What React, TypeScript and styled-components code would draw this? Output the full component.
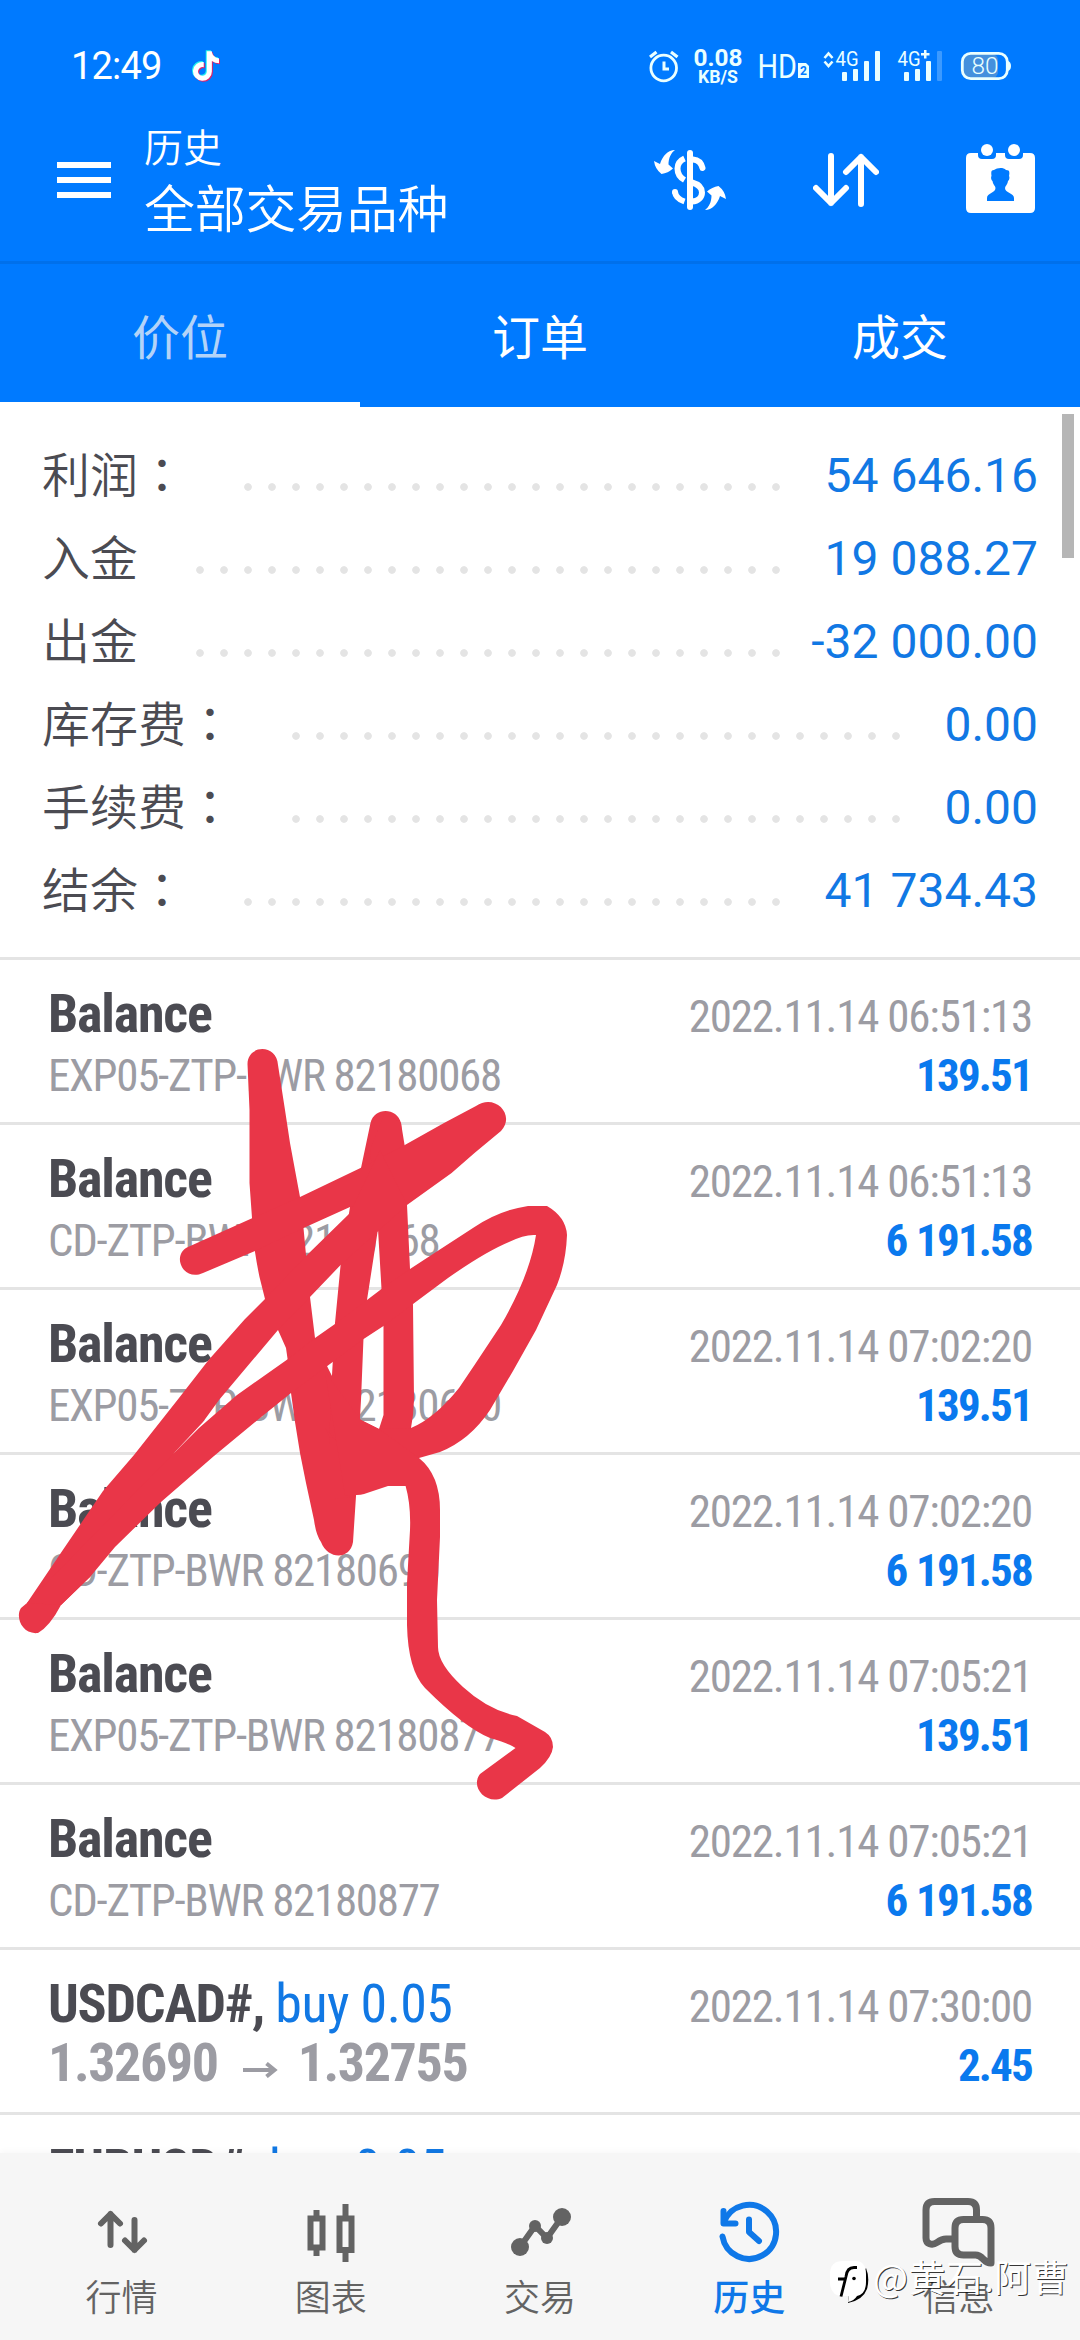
import styled, { createGlobalStyle, css } from 'styled-components';
import { FaTiktok } from 'react-icons/fa6';

const colors = {
	header: '#007aff',
	headerLine: '#0070eb',
	accent: '#1178e4',
	text: '#4b4b52',
	muted: '#9c9ca3',
	line: '#e4e4e4',
	nav: '#636363',
	navBg: '#f6f6f6',
	scribble: '#e93648',
};

const GlobalStyle = createGlobalStyle`
	* {
		box-sizing: border-box;
	}
	body {
		margin: 0;
		background: #fff;
		font-family: Roboto, 'Noto Sans CJK SC', sans-serif;
	}
`;

const Screen = styled.div`
	position: relative;
	width: 1080px;
	height: 2340px;
	overflow: hidden;
	display: flex;
	flex-direction: column;
	background: #fff;
	color: ${colors.text};
`;

/* ---------- header ---------- */

const Header = styled.header`
	background: ${colors.header};
	color: #fff;
	flex: none;
`;

const StatusBar = styled.div`
	height: 120px;
	padding: 12px 68px 0 71px;
	display: flex;
	align-items: center;
`;

const Clock = styled.span`
	width: 90px;
	font-size: 38px;
	line-height: 44px;
	letter-spacing: -0.8px;
	white-space: nowrap;
`;

const TikTok = styled.span`
	position: relative;
	width: 28px;
	height: 32px;
	margin-left: 31px;
	margin-right: auto;
`;

const TikTokLayer = styled(FaTiktok)<{ $shift: number }>`
	position: absolute;
	left: ${(props) => props.$shift}px;
	top: ${(props) => props.$shift}px;
	width: 26px;
	height: 30px;
`;

const AppBar = styled.div`
	height: 144px;
	padding: 0 45px 21px 57px;
	border-bottom: 3px solid ${colors.headerLine};
	display: flex;
	align-items: center;
	gap: 87px;
`;

const Titles = styled.div`
	flex: 1;
	margin-left: -54px;
	margin-top: 8px;
	display: flex;
	flex-direction: column;
	gap: 10px;
`;

const Subtitle = styled.span`
	font-size: 39px;
	line-height: 44px;
	font-weight: 350;
`;

const Title = styled.span`
	font-size: 51px;
	line-height: 60px;
	font-weight: 350;
	letter-spacing: -0.3px;
`;

const Tabs = styled.div`
	height: 143px;
	display: grid;
	grid-template-columns: repeat(3, 1fr);
`;

const Tab = styled.div<{ $active?: boolean }>`
	padding-top: 1px;
	border-bottom: 5px solid ${(props) => (props.$active ? '#fff' : 'transparent')};
	display: flex;
	align-items: center;
	justify-content: center;
	font-size: 48px;
	color: ${(props) => (props.$active ? '#b3d3f8' : '#fff')};
`;

/* ---------- summary ---------- */

const Summary = styled.section`
	flex: none;
	height: 553px;
	padding: 27px 42px 0;
	border-bottom: 3px solid ${colors.line};
`;

const SummaryRow = styled.div`
	display: flex;
	height: 83px;
	line-height: 83px;
	font-size: 48px;
`;

const SummaryLabel = styled.span`
	padding-top: 1px;
	font-weight: 350;
`;

const Colon = styled.span`
	font-family: 'Noto Sans CJK TC', sans-serif;
	font-weight: 400;
	line-height: 0;
`;

const Leader = styled.span`
	flex: 1;
	height: 8px;
	margin: 49px 29px 0 50px;
	background: radial-gradient(circle at center, ${colors.line} 3.4px, transparent 4.2px) 0 0 / 24px 8px repeat-x;
`;

const SummaryValue = styled.span`
	color: ${colors.accent};
`;

/* ---------- deals ---------- */

const condensed = css`
	font-family: 'Roboto Condensed', Roboto, sans-serif;
	font-stretch: 75%;
`;

const Deals = styled.section`
	flex: 1;
	min-height: 0;
	overflow: hidden;
`;

const Deal = styled.article`
	${condensed}
	height: 165px;
	padding: 24px 48px 0;
	border-bottom: 3px solid ${colors.line};
	white-space: nowrap;
`;

const DealLine = styled.div`
	height: 60px;
	display: flex;
	justify-content: space-between;
	align-items: baseline;
`;

const Symbol = styled.span`
	font-size: 54px;
	line-height: 60px;
	font-weight: 700;
	letter-spacing: -1.2px;
`;

const Side = styled.span`
	font-weight: 400;
	letter-spacing: -0.6px;
	color: ${colors.accent};
`;

const Time = styled.span`
	font-size: 45px;
	letter-spacing: -1.2px;
	color: ${colors.muted};
`;

const Comment = styled.span`
	font-size: 45px;
	line-height: 63px;
	letter-spacing: -1.3px;
	color: ${colors.muted};
`;

const Prices = styled.span`
	font-size: 54px;
	line-height: 57px;
	font-weight: 700;
	letter-spacing: -1.4px;
	color: ${colors.muted};
	display: flex;
	align-items: center;

	svg {
		margin: 14px 20px 0 25px;
	}
`;

const Profit = styled.span`
	font-size: 45px;
	line-height: 63px;
	font-weight: 700;
	letter-spacing: -1.8px;
	word-spacing: 1px;
	color: #0a79ee;
`;

/* ---------- bottom navigation ---------- */

const Nav = styled.nav`
	position: relative;
	flex: none;
	height: 187px;
	padding: 43px 17px 0;
	background: ${colors.navBg};
	box-shadow: 0 -2px 6px rgba(0, 0, 0, 0.03);
	display: grid;
	grid-template-columns: repeat(5, 1fr);
`;

const NavItem = styled.div<{ $active?: boolean }>`
	display: flex;
	flex-direction: column;
	align-items: center;
	gap: 9px;
	font-size: 36px;
	line-height: 44px;
	font-weight: ${(props) => (props.$active ? 500 : 350)};
	color: ${(props) => (props.$active ? '#0f78e8' : colors.nav)};
`;

/* ---------- overlays ---------- */

const ScrollThumb = styled.div`
	position: absolute;
	right: 6px;
	top: 414px;
	width: 12px;
	height: 144px;
	background: #b6b6b6;
`;

const Scribble = styled.svg`
	position: absolute;
	left: 0;
	top: 1040px;
`;

const Watermark = styled.div`
	position: absolute;
	left: 829px;
	top: 2256px;
	display: flex;
	gap: 4px;
	color: #fff;
	font-family: 'Noto Sans CJK SC', sans-serif;
	font-size: 37px;
	line-height: 40px;
	letter-spacing: 0.5px;
	font-weight: 400;
	white-space: nowrap;
	text-shadow: 1px 1px 0 rgba(0, 0, 0, 0.8);
`;

const summary = [
	{ label: '利润', colon: true, value: '54 646.16' },
	{ label: '入金', colon: false, value: '19 088.27' },
	{ label: '出金', colon: false, value: '-32 000.00' },
	{ label: '库存费', colon: true, value: '0.00' },
	{ label: '手续费', colon: true, value: '0.00' },
	{ label: '结余', colon: true, value: '41 734.43' },
];

type DealItem = {
	symbol: string;
	side?: string;
	comment?: string;
	prices?: [string, string];
	time: string;
	profit: string;
};

const deals: DealItem[] = [
	{ symbol: 'Balance', comment: 'EXP05-ZTP-BWR 82180068', time: '2022.11.14 06:51:13', profit: '139.51' },
	{ symbol: 'Balance', comment: 'CD-ZTP-BWR 82180068', time: '2022.11.14 06:51:13', profit: '6 191.58' },
	{ symbol: 'Balance', comment: 'EXP05-ZTP-BWR 82180690', time: '2022.11.14 07:02:20', profit: '139.51' },
	{ symbol: 'Balance', comment: 'CD-ZTP-BWR 82180690', time: '2022.11.14 07:02:20', profit: '6 191.58' },
	{ symbol: 'Balance', comment: 'EXP05-ZTP-BWR 82180877', time: '2022.11.14 07:05:21', profit: '139.51' },
	{ symbol: 'Balance', comment: 'CD-ZTP-BWR 82180877', time: '2022.11.14 07:05:21', profit: '6 191.58' },
	{ symbol: 'USDCAD#,', side: 'buy 0.05', prices: ['1.32690', '1.32755'], time: '2022.11.14 07:30:00', profit: '2.45' },
	{ symbol: 'EURUSD#,', side: 'buy 0.05', time: '', profit: '' },
];

function StatusIcons() {
	return (
		<svg width="364" height="40" viewBox="648 46 364 40" fill="none" overflow="visible" fontFamily="Roboto, sans-serif">
			{/* alarm */}
			<g stroke="#eaffff" strokeWidth="2.8">
				<circle cx="663.7" cy="68" r="12.8" />
				<path d="M650 57l6.500-5M677.500 57l-6.500-5" strokeWidth="3.200" />
				<path d="M664 61.500v7.500h5" strokeWidth="3" />
			</g>
			<g fill="#eaffff">
				<text x="693.500" y="66" fontSize="24.500" fontWeight="700" textLength="49" lengthAdjust="spacingAndGlyphs">0.08</text>
				<text x="698" y="83" fontSize="18" fontWeight="700" textLength="40" lengthAdjust="spacingAndGlyphs">KB/S</text>
				<text x="757.500" y="78" fontSize="33.500" fontWeight="400" textLength="39.500" lengthAdjust="spacingAndGlyphs">HD</text>
				<path d="M798 63h8l3 3v12h-11z" />
			</g>
			<text x="800" y="75" fontSize="12" fontWeight="700" fill="#007aff">2</text>
			{/* first sim */}
			<path d="M824.500 58l4-4.500 4 4.500M824.500 61.500l4 4.500 4-4.500" stroke="#eaffff" strokeWidth="2.600" />
			<g fill="#eaffff">
				<text x="835.500" y="65.500" fontSize="20.500" textLength="23" lengthAdjust="spacingAndGlyphs">4G</text>
				<rect x="842" y="72" width="5" height="9" rx="1" />
				<rect x="853" y="69" width="5" height="12" rx="1" />
				<rect x="864" y="61" width="5" height="20" rx="1" />
				<rect x="875" y="51" width="5" height="30" rx="1" />
				{/* second sim */}
				<text x="897.500" y="65.500" fontSize="20.500" textLength="23" lengthAdjust="spacingAndGlyphs">4G</text>
				<path d="M921 53h3v-3h2.500v3h3v2.500h-3v3h-2.500v-3h-3z" />
				<rect x="904" y="72" width="5" height="9" rx="1" />
				<rect x="915" y="69" width="5" height="12" rx="1" />
				<rect x="926" y="61" width="5" height="20" rx="1" />
			</g>
			<rect x="937" y="51" width="5" height="30" rx="1" fill="#3c9aff" />
			{/* battery */}
			<rect x="963" y="54" width="35" height="24" rx="6" fill="#4490dd" />
			<rect x="962.300" y="53.300" width="45" height="25.400" rx="8.500" stroke="#eaffff" strokeWidth="2.800" />
			<path d="M1008 61q3 1 3 5t-3 5z" fill="#eaffff" />
			<text x="971.500" y="73.500" fontSize="23" fontWeight="350" fill="#eaffff" textLength="27" lengthAdjust="spacingAndGlyphs">80</text>
		</svg>
	);
}

function MenuIcon() {
	return (
		<svg width="54" height="36" fill="#fff">
			<path d="M0 0h54v6H0zM0 15h54v6H0zM0 30h54v6H0z" />
		</svg>
	);
}

function CurrencyIcon() {
	return (
		<svg width="72" height="60" viewBox="0 0 72 60" fill="none">
			<g fill="#fff">
				<path d="M21 0C17 3 14.500 8 14.500 14.500L19 18.500Q14 23 7.500 24Q1 19 0 11L6 14C8.500 6 14 0 21 0z" />
				<path d="M51 60C55 57 57.500 52 57.500 45.500L53 41.500Q58 37 64.500 36Q71 41 72 49L66 46C63.500 54 58 60 51 60z" />
			</g>
			<g stroke="#fff" strokeWidth="6">
				<path d="M36 3v54" strokeLinecap="round" />
				<path d="M30.500 8.500C25 11 23.500 15 23.500 18.500C23.500 24 26 27.500 30.500 30" />
				<path d="M39 9.500C45 10 47.500 13.500 48.500 18" strokeLinecap="round" />
				<path d="M38 32.500C45 34.500 48 38 48 42.500C48 47 44.500 51 38 51.500" />
				<path d="M21 42C21.500 46.500 24.500 49.500 30.500 51.500" />
			</g>
			<circle cx="21" cy="42" r="3" fill="#fff" />
		</svg>
	);
}

function SortIcon() {
	return (
		<svg width="66" height="54" viewBox="0 0 66 54" fill="none" stroke="#fff" strokeWidth="6" strokeLinecap="round" strokeLinejoin="round">
			<path d="M18 3v47M3 35l15 15 15-15M48 51V4M33 19L48 4l15 15" />
		</svg>
	);
}

function CalendarIcon() {
	return (
		<svg width="69" height="72" viewBox="0 0 69 72" fill="#fff">
			<circle cx="21" cy="6" r="6" />
			<circle cx="48" cy="6" r="6" />
			<path
				fillRule="evenodd"
				d="M5 9h7v2q0 4 4 4h10q4 0 4-4V9h9v2q0 4 4 4h10q4 0 4-4V9h7q5 0 5 5v50q0 5-5 5H5q-5 0-5-5V14q0-5 5-5zM21 57h27v-3c0-5-9-5-9-10 0-2 3-4 3-7 1-1 2-3 1-5 1-5 0-6-3-6-3-3-9-2-12 0-3 0-3 2-2.500 6-1 2 0 4 1 5 0 3 3 5 3 7 0 5-8.500 5-8.500 10z"
			/>
		</svg>
	);
}

const navIcons = {
	quotes: (
		<g strokeLinecap="round" strokeLinejoin="round">
			<path d="M24.500 49V18M15 27.500l9.500-9.500 9.500 9.500M48.500 24v30M39 44.500l9.500 9.500 9.500-9.500" />
		</g>
	),
	charts: (
		<g>
			<path d="M15.500 22.500h12v29h-12zM44.500 22.500h12v31.500h-12z" />
			<path d="M21.500 14v7M21.500 53v7M50.500 8v13M50.500 56v10" />
		</g>
	),
	trade: (
		<g>
			<path d="M16 51l15-21 12 12 15-21" />
			<g fill="currentColor" stroke="none">
				<circle cx="16" cy="51" r="9" />
				<circle cx="31" cy="30" r="6" />
				<circle cx="43" cy="42" r="6" />
				<circle cx="58" cy="21" r="9" />
			</g>
		</g>
	),
	history: (
		<g strokeLinecap="round" strokeLinejoin="round">
			<path d="M9.500 40.500A27 27 0 1 0 11 26" />
			<path d="M10.500 15v12.500H22.500M36 23.500V36l10 9" />
		</g>
	),
	messages: (
		<g strokeWidth="7">
			<path d="M54.500 21V14q0-8.500-8.500-8.500H12.500Q4 5.500 4 14v28c0 6 6 8 11 4.500q5-3.500 9-3.500h8" />
			<path d="M69 62V32q0-8.500-8.500-8.500H41.500q-8.500 0-8.500 8.500v18.500q0 8.500 8.500 8.500h12c8 0 7 8 15.500 8z" strokeLinejoin="round" />
		</g>
	),
};

const navItems: { icon: keyof typeof navIcons; label: string; active?: boolean }[] = [
	{ icon: 'quotes', label: '行情' },
	{ icon: 'charts', label: '图表' },
	{ icon: 'trade', label: '交易' },
	{ icon: 'history', label: '历史', active: true },
	{ icon: 'messages', label: '信息' },
];

function DealRow({ deal }: { deal: DealItem }) {
	return (
		<Deal>
			<DealLine>
				<Symbol>
					{deal.symbol} {deal.side && <Side>{deal.side}</Side>}
				</Symbol>
				<Time>{deal.time}</Time>
			</DealLine>
			<DealLine>
				{deal.comment && <Comment>{deal.comment}</Comment>}
				{deal.prices && (
					<Prices>
						{deal.prices[0]}
						<svg width="35" height="16" viewBox="0 0 35 16" fill="none" stroke="currentColor" strokeWidth="4">
							<path d="M0 8h31M23.500 1.500l8 6.500-8 6.500" />
						</svg>
						{deal.prices[1]}
					</Prices>
				)}
				<Profit>{deal.profit}</Profit>
			</DealLine>
		</Deal>
	);
}

// red marker strokes drawn over the list
const strokes = [
	'M247.500 1064C248 1044 277 1044 278 1065L285 1110 290 1143 300 1197 303.500 1228 306 1255 310 1297 315 1338 327 1366 332 1376 345 1420 358 1453 356 1496 353 1542C350 1560 328 1560 321 1542Q316 1535 314 1520L306 1483 300 1453 295 1422 291 1393 288 1362 286 1348 278 1330 265 1299 259.500 1277Q257 1265 255 1252L252 1218 249.500 1183V1110z',
	'M370.500 1123C374 1107 397 1107 401 1123L407 1160 378 1229 367 1300 363.500 1338 361 1400 358 1453 356 1496 329 1500V1444L332 1375 335 1323 340.600 1265 350 1207 361 1168z',
	'M385 1112L401 1123 403 1146 407 1205 410 1269 413 1305 414 1400 413 1415 411 1428 400 1460 370 1460 379 1429 383.500 1415V1327L381.500 1289 378 1229 370 1150z',
	'M188 1247L252.600 1218 300 1197 360.500 1168 403 1146 444 1123 476 1106C495 1093 516 1115 501 1131L474.500 1153 451.600 1173 407 1205 350 1207 303.500 1228 255 1251 203 1273C183 1282 171 1255 188 1247z',
	'M407 1205L340.600 1265 310 1297 278 1330 219 1400 203 1422 175 1452 90 1577 61 1605Q50 1626 38 1633C22 1635 15 1617 21 1608L27 1603 57.400 1558 103 1491 134 1455 179 1398 208.600 1360 245 1319 265 1299 306 1256 350 1213 380 1150z',
	'M27 1603L175 1452 199 1428 237 1395 288 1359 315 1338 335 1324 367 1300 381.500 1289 410 1269 436 1252 474.500 1227Q500 1210 528 1206H547Q566 1217 567 1235 566 1262 557 1285L536 1330 513 1371 490 1410Q470 1440 440 1452L419 1458 361 1470 325 1428 330 1438 361 1420 379 1429 411 1428Q435 1418 459 1388L474.500 1365 501 1325Q530 1275 536 1235 525 1234 509 1242 485 1252 448 1278L413 1304 383.500 1326 363.600 1339 291 1393 260 1418 214 1456 161 1502 115 1547 90 1577 61 1605z',
	'M325 1372L361 1420 379 1429 419 1458Q440 1475 440 1510V1537L437 1600 438 1647Q438 1664 463 1687T517 1716L545 1732Q553 1737 553 1747 552 1757 540 1768L502 1798C486 1805 470 1787 480 1774L515.500 1748Q508 1743 490 1738 465 1728 425 1688 408 1670 407 1625V1583L410 1530Q411 1505 405.600 1486H388L367 1493Q360 1496 345 1495z',
];

function MarkerScribble() {
	return (
		<Scribble width="600" height="770" viewBox="0 1040 600 770" fill={colors.scribble}>
			{strokes.map((d) => (
				<path key={d} d={d} />
			))}
		</Scribble>
	);
}

function WatermarkLogo() {
	return (
		<svg width="40" height="48" viewBox="0 -2 40 48">
			<path d="M20 37l-1 8q15-3 19-14Q41 20 37 10" fill="#000" />
			<path d="M14 3h12q11 0 11 13v8q0 12-9 14-3 5-9 6l1-6h-6Q1 38 1 24v-8Q1 3 14 3z" fill="#fff" />
			<path d="M28 9.500h-3q-7 0-8 9l-5 20M9 21h8" fill="none" stroke="#000" strokeWidth="2.800" />
			<circle cx="25" cy="20.500" r="1.800" />
		</svg>
	);
}

export default function App() {
	return (
		<Screen>
			<GlobalStyle />
			<Header>
				<StatusBar>
					<Clock>12:49</Clock>
					<TikTok>
						<TikTokLayer $shift={0} color="#25f4ee" />
						<TikTokLayer $shift={2} color="#e0206a" />
						<TikTokLayer $shift={1} color="#fff" />
					</TikTok>
					<StatusIcons />
				</StatusBar>
				<AppBar>
					<MenuIcon />
					<Titles>
						<Subtitle>历史</Subtitle>
						<Title>全部交易品种</Title>
					</Titles>
					<CurrencyIcon />
					<SortIcon />
					<CalendarIcon />
				</AppBar>
				<Tabs>
					<Tab $active>价位</Tab>
					<Tab>订单</Tab>
					<Tab>成交</Tab>
				</Tabs>
			</Header>
			<Summary>
				{summary.map((row) => (
					<SummaryRow key={row.label}>
						<SummaryLabel>
							{row.label}
							{row.colon && <Colon lang="zh-TW">：</Colon>}
						</SummaryLabel>
						<Leader />
						<SummaryValue>{row.value}</SummaryValue>
					</SummaryRow>
				))}
			</Summary>
			<Deals>
				{deals.map((deal, index) => (
					<DealRow key={index} deal={deal} />
				))}
			</Deals>
			<Nav>
				{navItems.map((item) => (
					<NavItem key={item.icon} $active={item.active}>
						<svg width="72" height="72" viewBox="0 0 72 72" fill="none" stroke="currentColor" strokeWidth="6" overflow="visible">
							{navIcons[item.icon]}
						</svg>
						{item.label}
					</NavItem>
				))}
			</Nav>
			<ScrollThumb />
			<MarkerScribble />
			<Watermark>
				<WatermarkLogo />
				@黄石.阿曹
			</Watermark>
		</Screen>
	);
}
